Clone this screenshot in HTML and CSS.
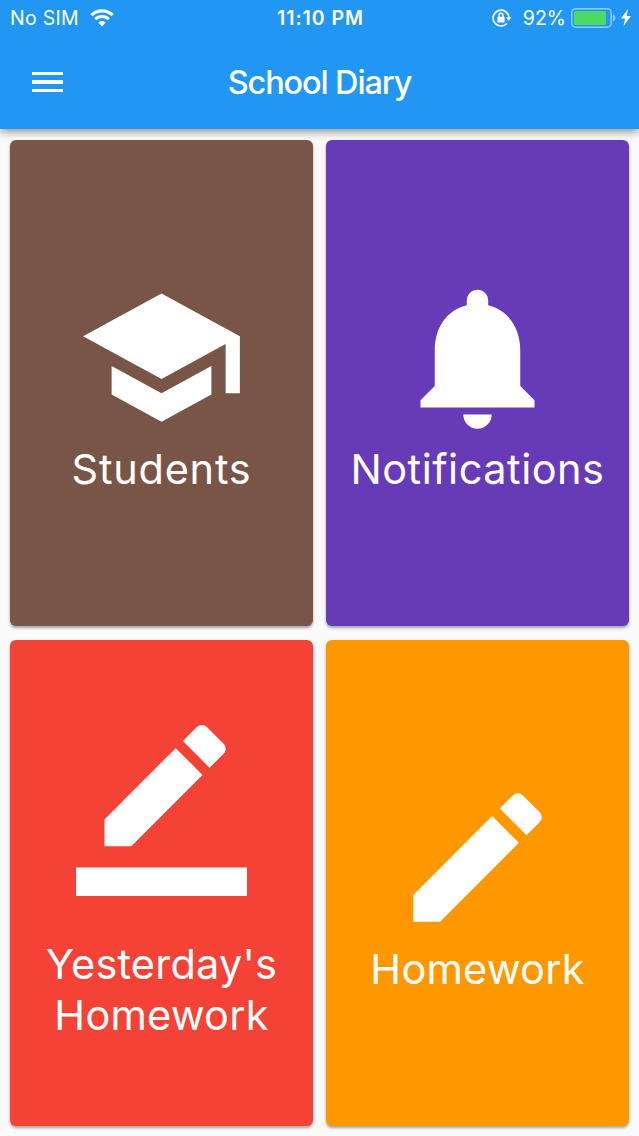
FILE: index.html
```html
<!DOCTYPE html>
<html lang="en">
<head>
  <meta charset="UTF-8" />
  <meta name="viewport" content="width=device-width, initial-scale=1.0"/>
  <title>School Diary</title>
  <link rel="stylesheet" href="styles.css">
</head>
<body>

  <header class="header">
    <!-- Status bar -->
    <div class="status">
      <div class="status-left">
        <span class="carrier">No SIM</span>
        <svg class="wifi" viewBox="0 0 24 18" width="24" height="18" fill="none" stroke="#fff">
          <path d="M1.3 6.2a15.2 15.2 0 0 1 21.4 0" stroke-width="3.2"/>
          <path d="M5.2 10.3a9.6 9.6 0 0 1 13.6 0" stroke-width="2.9"/>
          <path d="M12 17.4l-3.7-3.8a5.3 5.3 0 0 1 7.4 0z" fill="#fff" stroke="none"/>
        </svg>
      </div>
      <div class="time">11:10 PM</div>
      <div class="status-right">
        <svg class="lock" viewBox="0 0 20 18" width="20" height="18" fill="none" stroke="#fff">
          <path d="M14.8 14.5A7.9 7.9 0 1 1 16.9 8.5" stroke-width="1.7"/>
          <path d="M13.8 8.3h5.6l-2.8 3.6z" fill="#fff" stroke="none"/>
          <rect x="5.4" y="7.8" width="7.2" height="5.6" rx=".6" fill="#fff" stroke="none"/>
          <path d="M7 8V6.2a2 2 0 0 1 4 0V8" stroke-width="1.4"/>
        </svg>
        <span class="percent">92%</span>
        <svg class="battery" viewBox="0 0 45 20" width="45" height="20">
          <rect x=".8" y=".8" width="39.4" height="18.4" rx="4" fill="none" stroke="#fff" stroke-opacity=".5" stroke-width="1.5"/>
          <rect x="3" y="3" width="32" height="14" rx="1.8" fill="#4cd964"/>
          <path d="M42 6.6c3.2 1.2 3.2 5.6 0 6.8z" fill="#fff" fill-opacity=".5"/>
        </svg>
        <svg class="bolt" viewBox="0 0 10 17" width="10" height="17">
          <path d="M6.9 0L0 9.6h4L2.6 17 10 6.9H5.8z" fill="#fff"/>
        </svg>
      </div>
    </div>

    <!-- App bar -->
    <div class="toolbar">
      <button class="menu" aria-label="Menu">
        <span></span>
        <span></span>
        <span></span>
      </button>
      <h1>School Diary</h1>
    </div>
  </header>

  <main class="grid">
    <a class="card students" href="#">
      <svg class="icon" viewBox="0 0 24 24">
        <path d="M5 13.18v4L12 21l7-3.82v-4L12 17l-7-3.82zM12 3L1 9l11 6 9-4.91V17h2V9L12 3z"/>
      </svg>
      <span class="label">Students</span>
    </a>

    <a class="card notifications" href="#">
      <svg class="icon" viewBox="0 0 24 24">
        <path d="M12 22c1.1 0 2-.9 2-2h-4c0 1.1.89 2 2 2zm6-6v-5c0-3.07-1.64-5.64-4.5-6.32V4c0-.83-.67-1.5-1.5-1.5s-1.5.67-1.5 1.5v.68C7.63 5.36 6 7.92 6 11v5l-2 2v1h16v-1l-2-2z"/>
      </svg>
      <span class="label">Notifications</span>
    </a>

    <a class="card yesterday" href="#">
      <svg class="icon" viewBox="0 0 24 24">
        <path d="M17.75 7L14 3.25l-10 10V17h3.75l10-10zm2.96-2.96c.39-.39.39-1.02 0-1.41L18.37.29c-.39-.39-1.02-.39-1.41 0L15 2.25 18.75 6l1.96-1.96z"/>
        <path d="M0 20h24v4H0z"/>
      </svg>
      <span class="label">Yesterday's<br>Homework</span>
    </a>

    <a class="card homework" href="#">
      <svg class="icon" viewBox="0 0 24 24">
        <path d="M3 17.25V21h3.75L17.81 9.94l-3.75-3.75L3 17.25zM20.71 7.04c.39-.39.39-1.02 0-1.41l-2.34-2.34c-.39-.39-1.02-.39-1.41 0l-1.83 1.83 3.75 3.75 1.83-1.83z"/>
      </svg>
      <span class="label">Homework</span>
    </a>
  </main>

</body>
</html>
```

FILE: styles.css
```css
* {
  box-sizing: border-box;
}
body {
  margin: 0;
  height: 100vh;
  display: flex;
  flex-direction: column;
  overflow: hidden;
  background: #fafafa;
  color: #fff;
  font-family: Inter, "Liberation Sans", sans-serif;
}
.header {
  height: 129px;
  flex-shrink: 0;
  background: #2196f3;
  box-shadow: 0 3px 8px rgba(0, 0, 0, 0.4);
}
.status {
  height: 35px;
  padding: 0 8px 0 10px;
  display: grid;
  grid-template-columns: 1fr auto 1fr;
  align-items: center;
  font-size: 19.5px;
}
.status-left,
.status-right {
  display: flex;
  align-items: center;
}
.status-right {
  justify-content: flex-end;
}
.carrier {
  letter-spacing: 0.3px;
}
.wifi {
  margin-left: 11px;
}
.time {
  font-weight: 600;
  letter-spacing: 0.95px;
}
.percent {
  margin: 0 5px 0 11px;
}
.bolt {
  margin-left: 5px;
}
.toolbar {
  height: 94px;
  padding: 0 32px;
  display: grid;
  grid-template-columns: 32px 1fr 32px;
  align-items: center;
}
.menu {
  display: flex;
  flex-direction: column;
  gap: 5px;
  width: 31px;
  padding: 0;
  border: none;
  background: none;
}
.menu span {
  height: 3.6px;
  background: #fff;
}
h1 {
  margin: 0;
  font-size: 32.5px;
  font-weight: 500;
  letter-spacing: -1.15px;
  text-align: center;
}
.grid {
  flex: 1;
  display: grid;
  grid-template-columns: 1fr 1fr;
  grid-template-rows: 1fr 1fr;
  gap: 14px 13px;
  padding: 11px 10px 10px;
}
.card {
  display: flex;
  flex-direction: column;
  align-items: center;
  justify-content: center;
  border-radius: 6px;
  box-shadow: 0 2px 3px rgba(0, 0, 0, 0.35);
  color: #fff;
  text-decoration: none;
}
.students {
  background: #795548;
}
.notifications {
  background: #673ab7;
}
.yesterday {
  background: #f44336;
}
.homework {
  background: #ff9800;
}
.icon {
  width: 171px;
  height: 171px;
  fill: #fff;
}
.yesterday .icon {
  margin-bottom: 43px;
}
.label {
  font-size: 41.5px;
  line-height: 51px;
  letter-spacing: 0.5px;
  text-align: center;
}
.students .label {
  letter-spacing: 0.75px;
}
.yesterday .label,
.homework .label {
  letter-spacing: 0.2px;
}
.students .label,
.notifications .label,
.homework .label {
  padding-top: 1px;
}
```
